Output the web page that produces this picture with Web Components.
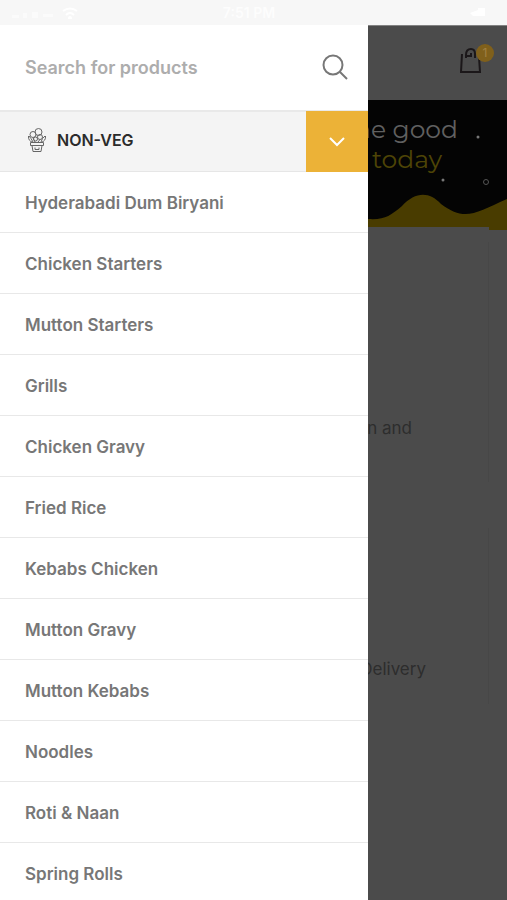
<!DOCTYPE html>
<html lang="en">
<head>
<meta charset="utf-8">
<meta name="viewport" content="width=device-width, initial-scale=1">
<title>Menu</title>
<style>
html, body { margin: 0; height: 100%; }
body { font-family: Inter, "Liberation Sans", sans-serif; overflow: hidden; }
</style>
</head>
<body>
<app-shell>
  <status-bar slot="status"></status-bar>
  <store-page slot="page"></store-page>
  <menu-drawer slot="drawer">
    <search-field slot="search"></search-field>
    <menu-group slot="group">NON-VEG</menu-group>
    <menu-item>Hyderabadi Dum Biryani</menu-item>
    <menu-item>Chicken Starters</menu-item>
    <menu-item>Mutton Starters</menu-item>
    <menu-item>Grills</menu-item>
    <menu-item>Chicken Gravy</menu-item>
    <menu-item>Fried Rice</menu-item>
    <menu-item>Kebabs Chicken</menu-item>
    <menu-item>Mutton Gravy</menu-item>
    <menu-item>Mutton Kebabs</menu-item>
    <menu-item>Noodles</menu-item>
    <menu-item>Roti &amp; Naan</menu-item>
    <menu-item>Spring Rolls</menu-item>
  </menu-drawer>
</app-shell>
<script>
const define = (name, html) => {
  const template = document.createElement('template');
  template.innerHTML = html;
  customElements.define(name, class extends HTMLElement {
    constructor() {
      super();
      this.attachShadow({ mode: 'open' }).append(template.content.cloneNode(true));
    }
  });
};

define('app-shell', `
<style>
:host { display: grid; grid-template-rows: auto minmax(0, 1fr); height: 100vh; overflow: hidden; }
.stage { display: grid; grid-template: minmax(0, 1fr) / minmax(0, 1fr); overflow: hidden; }
.stage > slot { display: contents; }
::slotted([slot="page"]), ::slotted([slot="drawer"]) { grid-area: 1 / 1; }
::slotted([slot="drawer"]) { z-index: 1; margin-right: 139px; }
</style>
<slot name="status"></slot>
<div class="stage"><slot name="page"></slot><slot name="drawer"></slot></div>`);

define('status-bar', `
<style>
:host { display: grid; grid-template-columns: 1fr auto 1fr; align-items: center; box-sizing: border-box;
  height: 25px; padding: 0 21px 0 12px; background: #f7f7f7; color: #fdfdfd; font-size: 14px; line-height: 16px; font-weight: 600; }
.left { display: flex; align-items: center; gap: 8px; }
.battery { justify-self: end; }
svg { display: block; }
</style>
<div class="left">
  <svg width="42" height="10" viewBox="0 0 42 10" fill="#fbfbfb"><rect y="7" width="7" height="3"/><rect x="11" y="5" width="4" height="5"/><rect x="20" y="4" width="6" height="6"/><rect x="31" y="6" width="10" height="3"/></svg>
  <svg width="16" height="12" viewBox="0 0 16 12" fill="none" stroke="#fff" stroke-width="2"><path d="M1 4Q8-1 15 4M4 8Q8 4 12 8"/><circle cx="8" cy="11" r="1"/></svg>
</div>
<span>7:51 PM</span>
<svg class="battery" width="16" height="9" viewBox="0 0 16 9"><path d="M0 5L8 2V0h7v8H3z" fill="#fff"/></svg>`);

define('store-page', `
<style>
:host { display: flex; flex-direction: column; overflow: hidden; background: #4b4b4b; border-top: 1px solid #828282; box-sizing: border-box; }
header { display: flex; justify-content: flex-end; align-items: center; box-sizing: border-box; height: 74px; padding: 0 13px 4px; }
button { display: block; position: relative; width: 34px; height: 36px; padding: 0; border: 0; background: none; font: 12px/18px Inter, sans-serif; }
button svg { display: block; }
.badge { position: absolute; top: 1px; right: 0; width: 18px; height: 18px; border-radius: 50%; background: #80601b; color: #a08043; text-align: center; }
.hero { display: grid; height: 130px; background: #040404; overflow: hidden; }
.hero > * { grid-area: 1 / 1; }
.hero svg { width: 139px; height: 130px; justify-self: end; }
.hero p { margin: 0; padding: 14px 0 0; font: 25px/30px Montserrat, Lato, sans-serif; color: #606060; display: grid; justify-items: end; align-content: start; }
.hero .first { margin-right: 49px; }
.hero .second { margin-right: 65px; color: #4e4406; }
.card { box-sizing: border-box; margin-right: 18px; border-right: 1px solid #474747; text-align: right; color: #2d2d2d; font-size: 17px; line-height: 24px; }
.delivery { height: 240px; margin-top: 12px; padding: 174px 76px 0 0; }
.speed { height: 176px; margin-top: 46px; padding: 129px 62px 0 0; }
</style>
<header>
  <button aria-label="Cart, 1 item">
    <svg width="28" height="36" viewBox="0 0 28 36" fill="none" stroke="#1b1719" stroke-width="2"><path d="M2 11L1 29H20L19 14"/><path d="M6 15V12Q6 6 11 6Q15 6 15 11V15M6 13H11V10"/></svg>
    <span class="badge">1</span>
  </button>
</header>
<section class="hero">
  <svg viewBox="0 0 139 130" fill="none"><path d="M0 127H121V130H0Z" fill="#4b4b4b"/><path d="M0 119C17 120 22 116 34 106C47 92 61 91 73 104C97 122 107 113 139 99V130H121V127H0Z" fill="#493c00"/><circle cx="110" cy="37" r="1.500" fill="#777"/><circle cx="75" cy="80" r="1.500" fill="#777"/><circle cx="118" cy="82" r="2.500" stroke="#555"/></svg>
  <p><span class="first">the good</span><span class="second">today</span></p>
</section>
<section class="card delivery">n and</section>
<section class="card speed">Delivery</section>`);

define('menu-drawer', `
<style>
:host { display: flex; flex-direction: column; background: #fff; overflow: hidden; }
nav { display: block; }
</style>
<slot name="search"></slot>
<slot name="group"></slot>
<nav><slot></slot></nav>`);

define('search-field', `
<style>
:host { display: block; flex: none; }
form { display: flex; align-items: center; height: 85px; padding: 0 20px 0 25px; }
input { flex: 1; min-width: 0; padding: 0; border: 0; outline: 0; background: none; color: #767676; font: 600 18px/24px Inter, sans-serif; }
input::placeholder { color: #adadad; opacity: 1; }
button { display: block; padding: 0; border: 0; background: none; }
svg { display: block; }
</style>
<form role="search">
  <input type="text" placeholder="Search for products" aria-label="Search for products">
  <button type="button" aria-label="Search"><svg width="26" height="28" viewBox="0 0 26 28" fill="none" stroke="#777" stroke-width="2"><circle cx="11" cy="11" r="9.500"/><path d="M18 18L25 25"/></svg></button>
</form>`);

define('menu-group', `
<style>
:host { display: flex; flex: none; height: 62px; box-sizing: border-box; background: #f4f4f4; border-top: 2px solid #e9e9e9; border-bottom: 1px solid #e6e6e6; }
a { flex: 1; display: flex; align-items: center; gap: 10px; padding: 0 0 3px 27px; color: #2b2b2b; text-decoration: none; font-size: 16px; line-height: 24px; font-weight: 600; }
button { width: 62px; margin: -1px 0 -1px; padding: 0; border: 0; background: #ecb237; display: grid; place-items: center; }
svg { display: block; }
</style>
<a href="#">
  <svg width="20" height="26" viewBox="0 0 20 26" fill="none" stroke="#666" stroke-width="1"><circle cx="11.500" cy="5" r="3.500"/><circle cx="6" cy="7.500" r="3"/><circle cx="13" cy="10" r="2.500"/><circle cx="8.500" cy="12" r="2"/><path d="M1.500 9Q1 14 6 15.500M2 9Q4 11 6 15M18.500 9Q19 14 14 15.500M18 9Q15 11 14 15M6 11L8 15M13 12.500L11 15"/><path d="M3.500 15.500H16.500V18.500H3.500ZM5 18.500L6 24.500H14L15 18.500M8 20.500V22.500H12V20.500"/></svg>
  <span><slot></slot></span>
</a>
<button type="button" aria-label="Toggle category" aria-expanded="true"><svg width="18" height="12" viewBox="0 0 18 12" fill="none" stroke="#fff" stroke-width="2"><path d="M2 2L9 9L16 2"/></svg></button>`);

define('menu-item', `
<style>
:host { display: block; border-bottom: 1px solid #e8e8e8; }
a { display: block; padding: 19px 25px 17px; color: #777; text-decoration: none; font-size: 17px; line-height: 24px; font-weight: 600; }
</style>
<a href="#"><slot></slot></a>`);
</script>
</body>
</html>
